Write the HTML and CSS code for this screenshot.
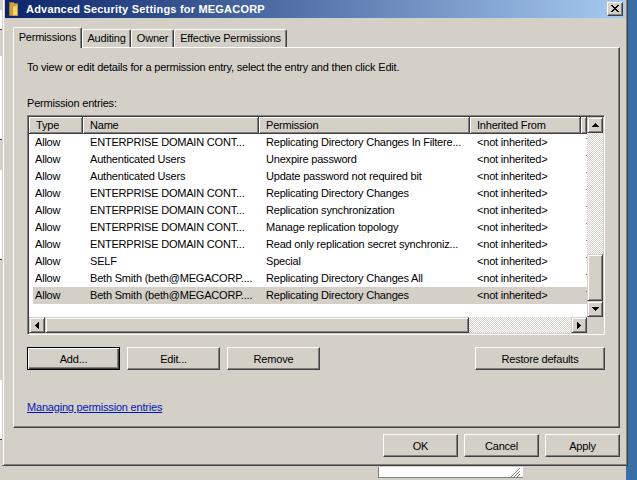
FILE: index.html
```html
<!DOCTYPE html>
<html>
<head>
<meta charset="utf-8">
<title>Advanced Security Settings for MEGACORP</title>
<link rel="stylesheet" href="styles.css">
</head>
<body>
<div class="desktop">
  <div class="bg-left">
    <span class="bg-field bf1"></span>
    <span class="bg-field bf2"></span>
    <span class="bg-field bf3"></span>
    <span class="bg-field bf4"></span>
  </div>
  <div class="bg-bottom">
    <div class="status-field">
      <svg class="grip" width="10" height="9" viewBox="0 0 10 9"><path d="M9 0L0 9M9 3L3 9M9 6L6 9" stroke="#808080" stroke-width="1" fill="none"/></svg>
    </div>
  </div>

  <div class="window">
    <div class="titlebar">
      <svg class="app-icon" width="10" height="14" viewBox="0 0 10 14">
        <path d="M0.5 0.5h4l1 1h3v12h-8z" fill="#c9a24a" stroke="#9a7a2a" stroke-width="1"/>
        <path d="M3.5 4.5l5-2v11l-5 0.5z" fill="#f4d46c" stroke="#c49a34" stroke-width="1"/>
      </svg>
      <span class="title">Advanced Security Settings for MEGACORP</span>
      <div class="close-btn">
        <svg width="8" height="7" viewBox="0 0 8 7" shape-rendering="crispEdges"><path d="M0 0h2v1H0zM6 0h2v1H6zM1 1h2v1H1zM5 1h2v1H5zM2 2h4v1H2zM3 3h2v1H3zM2 4h4v1H2zM1 5h2v1H1zM5 5h2v1H5zM0 6h2v1H0zM6 6h2v1H6z" fill="#000"/></svg>
      </div>
    </div>

    <div class="tabs">
      <div class="tab tab-active t-perm">Permissions</div>
      <div class="tab t-aud">Auditing</div>
      <div class="tab t-own">Owner</div>
      <div class="tab t-eff">Effective Permissions</div>
    </div>

    <div class="panel">
      <p class="intro">To view or edit details for a permission entry, select the entry and then click Edit.</p>
      <p class="label">Permission entries:</p>

      <div class="list">
        <div class="lv">
          <div class="lv-header">
            <div class="hcell">Type</div>
            <div class="hcell">Name</div>
            <div class="hcell">Permission</div>
            <div class="hcell">Inherited From</div>
            <div class="hcell hcell-end"></div>
          </div>
          <div class="row"><div class="c c-type">Allow</div><div class="c">ENTERPRISE DOMAIN CONT...</div><div class="c">Replicating Directory Changes In Filtere...</div><div class="c">&lt;not inherited&gt;</div><div class="c c-end"><span class="dot"></span></div></div>
          <div class="row"><div class="c c-type">Allow</div><div class="c">Authenticated Users</div><div class="c">Unexpire password</div><div class="c">&lt;not inherited&gt;</div><div class="c c-end"><span class="dot"></span></div></div>
          <div class="row"><div class="c c-type">Allow</div><div class="c">Authenticated Users</div><div class="c">Update password not required bit</div><div class="c">&lt;not inherited&gt;</div><div class="c c-end"><span class="dot"></span></div></div>
          <div class="row"><div class="c c-type">Allow</div><div class="c">ENTERPRISE DOMAIN CONT...</div><div class="c">Replicating Directory Changes</div><div class="c">&lt;not inherited&gt;</div><div class="c c-end"><span class="dot"></span></div></div>
          <div class="row"><div class="c c-type">Allow</div><div class="c">ENTERPRISE DOMAIN CONT...</div><div class="c">Replication synchronization</div><div class="c">&lt;not inherited&gt;</div><div class="c c-end"><span class="dot"></span></div></div>
          <div class="row"><div class="c c-type">Allow</div><div class="c">ENTERPRISE DOMAIN CONT...</div><div class="c">Manage replication topology</div><div class="c">&lt;not inherited&gt;</div><div class="c c-end"><span class="dot"></span></div></div>
          <div class="row"><div class="c c-type">Allow</div><div class="c">ENTERPRISE DOMAIN CONT...</div><div class="c">Read only replication secret synchroniz...</div><div class="c">&lt;not inherited&gt;</div><div class="c c-end"><span class="dot"></span></div></div>
          <div class="row"><div class="c c-type">Allow</div><div class="c">SELF</div><div class="c">Special</div><div class="c">&lt;not inherited&gt;</div><div class="c c-end"><span class="dot"></span></div></div>
          <div class="row"><div class="c c-type">Allow</div><div class="c">Beth Smith (beth@MEGACORP....</div><div class="c">Replicating Directory Changes All</div><div class="c">&lt;not inherited&gt;</div><div class="c c-end"><span class="dot"></span></div></div>
          <div class="row row-selected"><div class="c c-type">Allow</div><div class="c">Beth Smith (beth@MEGACORP....</div><div class="c">Replicating Directory Changes</div><div class="c">&lt;not inherited&gt;</div><div class="c c-end"><span class="dot"></span></div></div>
        </div>

        <div class="vscroll">
          <div class="sbtn"><svg width="7" height="4" viewBox="0 0 7 4" shape-rendering="crispEdges"><path d="M3 0h1v1h1v1h1v1h1v1H0V3h1V2h1V1h1z" fill="#000"/></svg></div>
          <div class="track v-track1"></div>
          <div class="thumb v-thumb"></div>
          <div class="sbtn"><svg width="7" height="4" viewBox="0 0 7 4" shape-rendering="crispEdges"><path d="M0 0h7v1H6v1H5v1H4v1H3V3H2V2H1V1H0z" fill="#000"/></svg></div>
        </div>

        <div class="hscroll">
          <div class="sbtn"><svg width="4" height="7" viewBox="0 0 4 7" shape-rendering="crispEdges"><path d="M3 0h1v7H3V6H2V5H1V4H0V3h1V2h1V1h1z" fill="#000"/></svg></div>
          <div class="thumb h-thumb"></div>
          <div class="track h-track"></div>
          <div class="sbtn"><svg width="4" height="7" viewBox="0 0 4 7" shape-rendering="crispEdges"><path d="M0 0h1v1h1v1h1v1h1v1H3v1H2v1H1v1H0z" fill="#000"/></svg></div>
        </div>
        <div class="corner"></div>
      </div>

      <div class="btnrow">
        <button class="btn btn-default btn-list">Add...</button>
        <button class="btn btn-list">Edit...</button>
        <button class="btn btn-list">Remove</button>
        <button class="btn btn-restore">Restore defaults</button>
      </div>

      <a class="link" href="#">Managing permission entries</a>
    </div>

    <div class="dlg-buttons">
      <button class="btn btn-dlg">OK</button>
      <button class="btn btn-dlg">Cancel</button>
      <button class="btn btn-dlg">Apply</button>
    </div>
  </div>
</div>
</body>
</html>
```

FILE: styles.css
```css
* { box-sizing: border-box; }
html, body { margin: 0; padding: 0; }
body {
  width: 637px;
  height: 480px;
  overflow: hidden;
  background: #3a6ea5;
  font-family: "Liberation Sans", Arial, sans-serif;
  font-size: 11px;
  letter-spacing: -0.2px;
  color: #000;
}
.desktop { position: relative; width: 637px; height: 480px; }

/* background windows */
.bg-left {
  position: absolute; left: 0; top: 0;
  width: 6px; height: 480px;
  background: #d4d0c8;
  display: flex; flex-direction: column;
}
.bg-field { display: block; background: #fff; border-bottom: 1px solid #404040; }
.bf1 { margin-top: 10px; height: 20px; }
.bf2 { margin-top: 26px; height: 84px; }
.bf3 { margin-top: 30px; height: 90px; }
.bf4 { margin-top: 120px; height: 60px; }

.bg-bottom {
  position: absolute; left: 0; top: 440px;
  width: 626px; height: 40px;
  background: #d4d0c8;
  padding: 27px 0 0 378px;
}
.status-field {
  width: 145px; height: 11px;
  background: #fff;
  border-left: 1px solid #808080;
  border-bottom: 1px solid #808080;
  display: flex; justify-content: flex-end; align-items: flex-end;
  padding-right: 2px;
}

/* dialog window */
.window {
  position: absolute; left: 2px; top: -3px;
  width: 626px; height: 469px;
  background: #d4d0c8;
  border: 1px solid;
  border-color: #d4d0c8 #404040 #404040 #d4d0c8;
  box-shadow: inset 1px 1px #fff, inset -1px -1px #808080;
  padding: 2px;
  display: flex; flex-direction: column;
}
.titlebar {
  height: 18px;
  flex: none;
  background: linear-gradient(to right, #0a246a, #a6caf0);
  display: flex; align-items: center;
  padding-left: 4px;
}
.app-icon { margin-right: 7px; flex: none; }
.title {
  color: #fff; font-weight: bold;
  letter-spacing: 0.2px;
  white-space: nowrap;
}
.close-btn {
  margin-left: auto; margin-right: 2px;
  width: 16px; height: 14px;
  background: #d4d0c8;
  border: 1px solid;
  border-color: #fff #404040 #404040 #fff;
  box-shadow: inset -1px -1px #808080;
  display: flex; align-items: center; justify-content: center;
  padding: 0 1px 1px 0;
}

/* tabs */
.tabs {
  display: flex; align-items: flex-end;
  height: 20px;
  margin: 9px 0 0 8px;
  position: relative; z-index: 1;
}
.tab {
  height: 18px;
  background: #d4d0c8;
  border-top: 1px solid #fff;
  border-left: 1px solid #fff;
  border-right: 1px solid #404040;
  box-shadow: inset -1px 0 #808080;
  border-radius: 2px 2px 0 0;
  text-align: center;
  line-height: 17px;
  white-space: nowrap;
}
.tab-active {
  height: 21px;
  margin-bottom: -1px;
  line-height: 18px;
}
.t-perm { width: 69px; }
.t-aud { width: 49px; }
.t-own { width: 43px; }
.t-eff { width: 113px; }

.panel {
  height: 381px;
  flex: none;
  margin: 0 5px 0 8px;
  border: 1px solid;
  border-color: #fff #404040 #404040 #fff;
  box-shadow: inset -1px -1px #808080;
  padding: 12px 14px 0 13px;
  display: flex; flex-direction: column; align-items: flex-start;
}
.intro { margin: 0; line-height: 14px; white-space: nowrap; }
.label { margin: 22px 0 0; line-height: 14px; }

/* list view */
.list {
  margin-top: 5px;
  width: 578px; height: 220px;
  flex: none;
  border: 1px solid;
  border-color: #808080 #fff #fff #808080;
  box-shadow: inset 1px 1px #404040, inset -1px -1px #d4d0c8;
  padding: 1px;
  background: #fff;
  display: grid;
  grid-template-columns: 558px 16px;
  grid-template-rows: 200px 16px;
}
.lv { background: #fff; overflow: hidden; }
.lv-header {
  display: grid;
  grid-template-columns: 54px 176px 211px 111px 6px;
  height: 17px;
}
.hcell {
  background: #d4d0c8;
  border-right: 1px solid #404040;
  border-bottom: 1px solid #404040;
  box-shadow: inset 1px 1px #fff, inset -1px -1px #808080;
  padding-left: 7px;
  line-height: 16px;
  white-space: nowrap; overflow: hidden;
}
.hcell-end { padding: 0; }
.row {
  display: grid;
  grid-template-columns: 50px 176px 211px 111px 6px;
  height: 17px;
  margin-left: 4px;
  line-height: 17px;
}
.row-selected { background: #d4d0c8; }
.c { padding-left: 7px; white-space: nowrap; overflow: hidden; }
.c-type { padding-left: 2px; }
.c-end { padding: 4px 0 0; display: flex; justify-content: flex-end; align-items: flex-start; }
.dot { width: 1px; height: 1px; background: #c06a1e; }

.sbtn {
  width: 16px; height: 16px; flex: none;
  background: #d4d0c8;
  border: 1px solid;
  border-color: #d4d0c8 #404040 #404040 #d4d0c8;
  box-shadow: inset 1px 1px #fff, inset -1px -1px #808080;
  display: flex; align-items: center; justify-content: center;
}
.thumb {
  flex: none;
  background: #d4d0c8;
  border: 1px solid;
  border-color: #d4d0c8 #404040 #404040 #d4d0c8;
  box-shadow: inset 1px 1px #fff, inset -1px -1px #808080;
}
.track {
  flex: none;
  background-color: #fff;
  background-image: conic-gradient(#d4d0c8 0 25%, #fff 0 50%, #d4d0c8 0 75%, #fff 0);
  background-size: 2px 2px;
}
.vscroll { display: flex; flex-direction: column; }
.v-track1 { height: 121px; }
.v-thumb { height: 47px; }
.hscroll { display: flex; }
.h-thumb { width: 424px; }
.h-track { width: 102px; }
.corner { background: #d4d0c8; }

/* buttons */
.btn {
  height: 23px;
  padding: 0;
  margin: 0;
  background: #d4d0c8;
  border: 1px solid;
  border-color: #fff #404040 #404040 #fff;
  box-shadow: inset -1px -1px #808080;
  font: inherit;
  letter-spacing: inherit;
  color: #000;
  text-align: center;
  line-height: 20px;
}
.btn-default {
  border-color: #000;
  box-shadow: inset 1px 1px #fff, inset -1px -1px #404040, inset -2px -2px #808080;
}
.btnrow {
  display: flex; gap: 7px;
  margin-top: 12px;
  width: 578px;
}
.btn-list { width: 93px; }
.btn-restore { width: 130px; margin-left: auto; }

.link {
  margin-top: 30px;
  line-height: 14px;
  color: #0018b8;
  text-decoration: underline;
}

.dlg-buttons {
  display: flex; justify-content: flex-end; gap: 6px;
  margin: 6px 5px 0 0;
}
.btn-dlg { width: 75px; }
```
